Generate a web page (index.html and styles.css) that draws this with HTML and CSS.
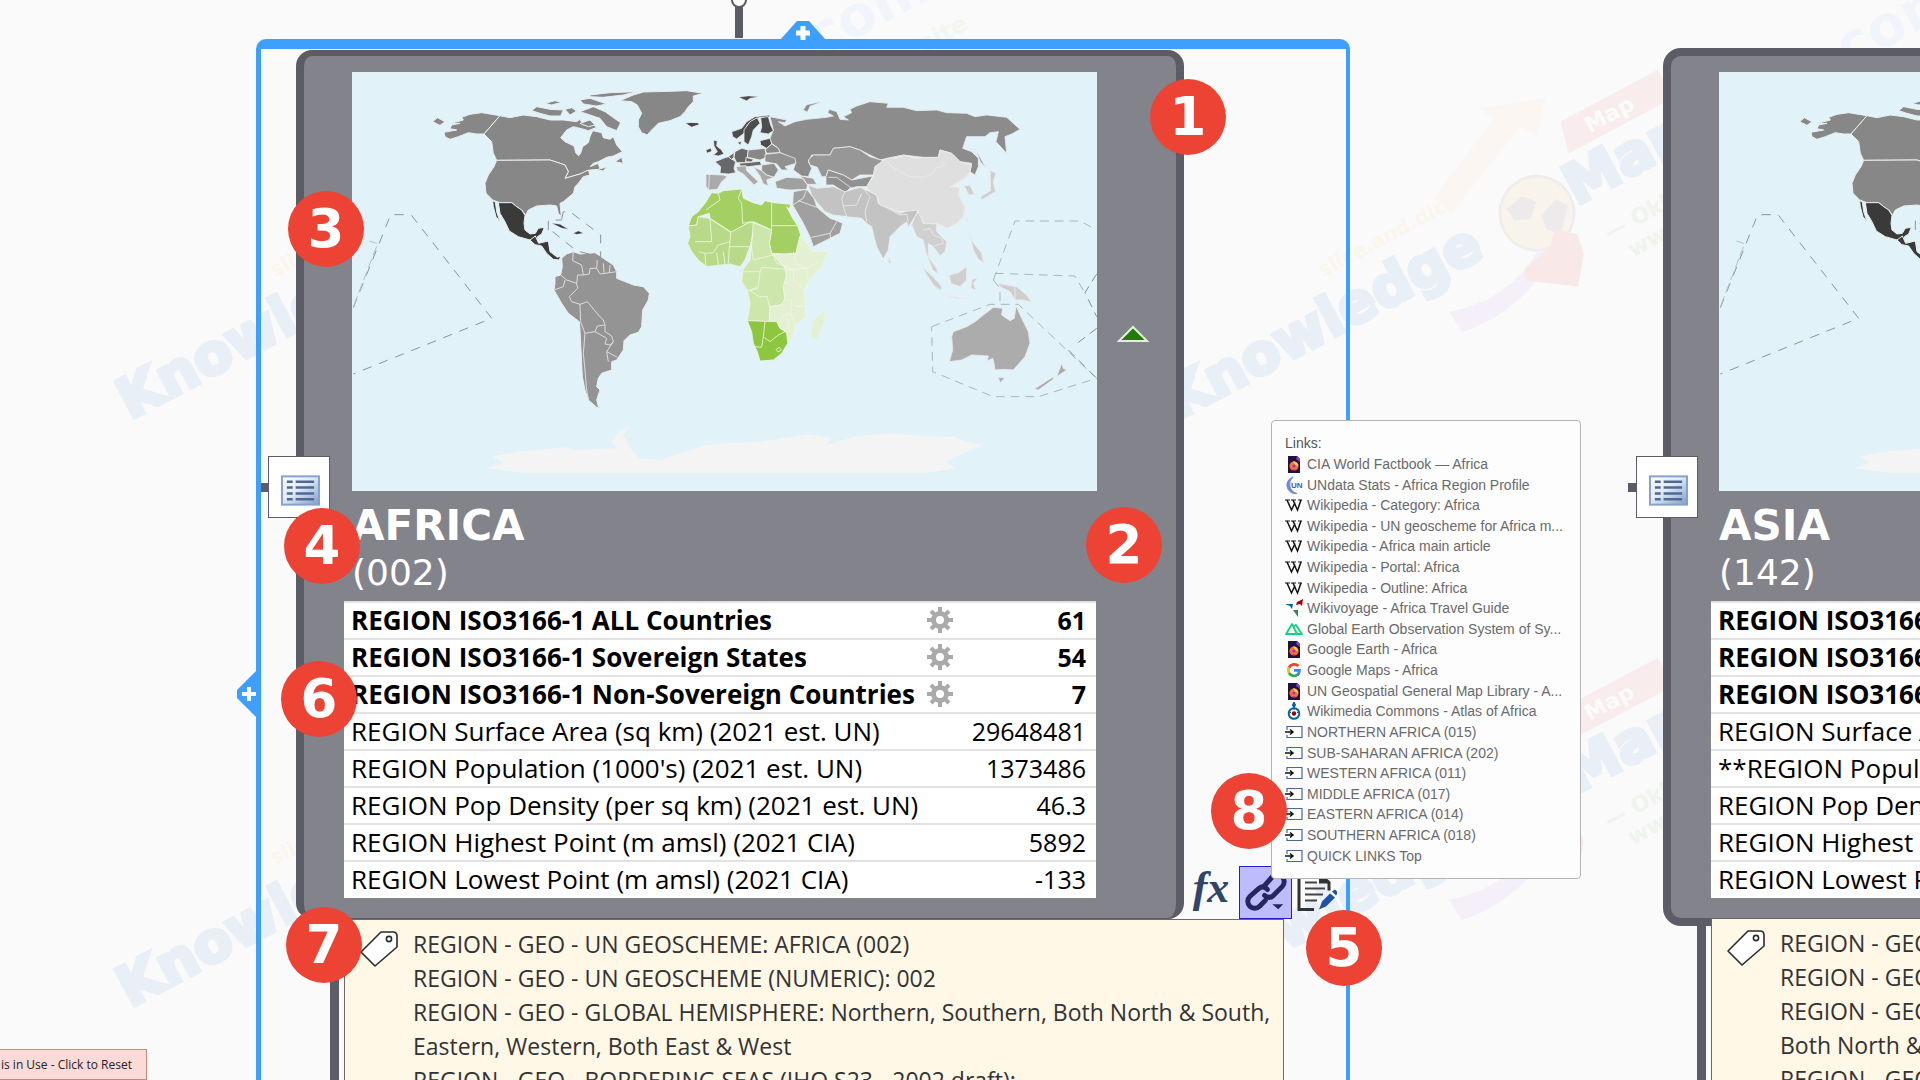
FILE: index.html
```html
<!DOCTYPE html>
<html lang="en">
<head>
<meta charset="utf-8">
<title>Regions of the world</title>
<link rel="stylesheet" href="styles.css">
</head>
<body>
<svg class="defs" aria-hidden="true">
  <symbol id="world" viewBox="0 0 745 419">
    <rect width="745" height="419" fill="#e1f2f9"/>
    <g transform="translate(-112 -72) scale(.33333)" fill="#f4f4f4">
      <path d="M740,1405 L790,1388 758,1370 830,1355 980,1342 1000,1350 1130,1345 1115,1325 1130,1300 1170,1275 1150,1305 1175,1350 1200,1375 1260,1380 1320,1360 1400,1335 1458,1330 1560,1325 1707,1303 1773,1315 1760,1335 1850,1308 1953,1300 2050,1308 2145,1310 2170,1322 2229,1335 2170,1360 2118,1385 2145,1405 2064,1418 850,1418Z"/>
    </g>
    <g transform="translate(-2 -2) scale(.33333)" stroke="#e9eef0" stroke-width="3" stroke-linejoin="round">
      <g fill="#878787">
        <path d="M282,187 L320,180 300,176 305,165 330,160 302,160 340,150 335,142 360,133 395,128 450,137 402,192 380,192 355,188 325,200 300,208 285,200Z"/>
        <path d="M248,155 L262,143 285,155 270,166Z"/>
        <path d="M450,137 L480,143 520,135 560,140 600,150 640,150 680,155 690,148 700,165 725,160 740,172 715,182 690,175 670,170 650,180 632,203 645,215 672,228 678,250 686,257 692,250 698,230 715,218 720,200 728,182 755,188 760,203 780,208 790,200 800,225 817,245 790,258 770,262 745,275 730,280 720,290 745,280 750,298 720,300 690,312 645,325 655,305 645,285 600,270 440,271 430,250 425,215 402,192Z"/>
        <path d="M440,271 L600,270 645,285 655,305 645,325 690,312 715,300 720,315 700,320 685,340 675,350 670,370 640,395 630,400 634,440 625,430 620,408 600,405 560,408 535,420 527,436 515,420 500,410 485,398 450,398 428,390 408,370 405,340 415,315 432,290Z"/>
        <path d="M545,122 L560,110 600,118 640,120 632,138 600,138 570,130Z M690,125 L730,110 765,125 800,150 812,158 800,182 770,170 750,145 720,135Z M720,75 L780,68 860,65 820,75 760,82 720,80Z M645,118 L665,113 680,123 660,135Z M690,90 L720,85 750,95 770,102 740,108 700,102Z M585,100 L615,92 635,97 605,105Z M690,160 L720,150 735,165 715,170Z M795,275 L815,262 820,280Z M740,300 L770,290 760,303Z"/>
        <path d="M810,92 L850,75 880,66 960,64 1010,62 1060,70 1030,78 1030,95 1015,110 1005,125 990,140 960,152 925,160 900,185 892,195 875,188 865,170 865,150 875,130 862,105 845,95Z"/>
      </g>
      <path d="M155,253 L185,248 M215,243 L300,215" fill="none"/>
      <path fill="#484848" d="M1005,160 L1020,157 1045,158 1048,164 1025,172Z"/>
      <g fill="#3a3a3a">
        <path d="M445,398 L485,398 500,410 515,420 525,436 522,460 525,480 540,492 556,490 565,475 583,472 575,492 562,500 560,518 540,510 505,500 478,483 465,455 450,430Z"/>
        <path d="M428,392 L436,396 440,425 450,455 438,440 430,410Z"/>
        <path d="M540,510 L556,498 566,520 595,513 600,545 622,562 632,558 628,570 610,568 590,550 575,528 555,524Z"/>
        <path stroke-width="1" d="M605,460 L630,463 655,478 635,474Z M670,490 L685,483 700,490 680,493Z"/>
      </g>
      <path fill="#949494" d="M650,552 L670,545 690,552 735,548 760,565 790,585 800,605 800,625 850,645 880,650 898,670 895,690 878,720 875,770 865,787 840,795 822,812 820,840 800,870 785,875 785,900 755,910 745,925 740,950 750,960 740,990 745,1010 760,1018 740,1012 715,990 705,960 697,920 690,780 688,755 655,730 635,700 612,660 615,640 615,620 632,615 637,590 635,565Z"/>
      <path fill="none" stroke="#dcdcdc" d="M670,545 L668,572 695,585 700,615 718,612 720,595 740,595 750,612 800,605 M740,595 L742,570 M760,580 L762,608 M780,585 L778,608 M632,615 L650,630 680,640 683,655 658,680 665,695 690,703 712,695 745,735 760,750 765,765 742,768 735,785 705,790 692,755 690,703 M612,660 L640,650 645,630 M680,640 L683,615 700,615 M735,785 L770,805 765,822 780,825 790,815 785,798 765,785 765,765 M790,815 L770,845 802,862 M770,845 L775,875 M705,790 L700,850 705,900 710,960 716,990"/>
      <g fill="none" stroke="#8f9496" stroke-dasharray="28 24">
        <path d="M10,713 L122,434 183,434 425,745 10,912"/>
        <path d="M595,480 V450 H635 M635,448 L640,425 660,425 752,495 752,560 680,543 608,485"/>
      </g>
      <path fill="none" stroke="#b9c0c3" stroke-dasharray="28 12" d="M12,705 L83,521 58,513"/>
    </g>
    <g transform="translate(318 -2) scale(.33333)" stroke="#ececec" stroke-width="2.5" stroke-linejoin="round">
      <path fill="#8c8c8c" d="M300,140 L350,150 345,158 325,155 345,168 375,155 410,148 470,142 490,138 473,128 478,118 500,125 510,148 535,150 520,140 545,128 540,118 560,108 600,95 655,100 650,112 700,112 740,122 800,120 830,128 890,130 915,140 950,135 1010,142 1050,178 1025,192 1005,200 1010,250 978,215 985,185 960,188 945,200 890,200 878,235 905,245 925,265 925,290 915,315 900,305 905,280 870,275 845,250 810,240 805,262 760,262 700,255 665,262 630,270 600,255 570,240 540,230 490,235 480,255 425,255 415,275 425,295 415,320 395,318 370,300 378,275 355,260 330,248 325,235 305,220 300,205 310,180Z"/>
      <path fill="#8c8c8c" stroke-width="1" d="M400,120 L410,105 455,95 420,108 412,125Z M547,73 L610,88 M547,76 L580,82 M770,102 L800,100 M920,245 L945,290 932,275Z"/>
      <path fill="#4c4c4c" stroke-width="1" d="M207,82 L235,78 265,80 240,85 230,92Z"/>
      <g fill="#4d4d4d">
        <path d="M130,210 L142,213 140,228 155,240 162,252 145,258 130,255 142,245 132,228Z M108,240 L122,234 126,244 110,250Z"/>
        <path d="M185,185 L215,175 230,155 255,140 300,135 298,142 270,142 250,150 232,165 222,190 200,207 188,200Z"/>
        <path d="M222,180 L240,155 262,143 270,160 250,180 245,200 235,225 222,215Z"/>
        <path d="M272,143 L295,140 302,165 310,182 295,192 270,188 275,172Z"/>
        <path d="M202,218 L214,213 212,226Z M270,212 L300,205 305,222 290,235 272,225Z"/>
      </g>
      <g fill="#686868">
        <path d="M135,275 L160,265 175,260 197,275 192,295 197,308 175,312 150,310 152,290Z"/>
        <path d="M195,245 L215,235 235,240 232,262 225,278 200,278 192,262Z M175,260 L192,248 192,262 185,268Z"/>
        <path d="M228,262 L250,268 246,276 228,275Z M208,280 L270,274 275,285 235,290 210,288Z"/>
      </g>
      <path fill="#888" d="M235,240 L285,235 290,262 270,270 232,262Z M285,240 L305,222 325,235 330,248 290,250Z"/>
      <path fill="#919191" d="M285,253 L330,248 375,265 378,280 345,290 355,300 335,300 320,282 285,275Z M275,285 L312,280 325,300 312,322 290,315 275,302Z"/>
      <path fill="#aaa" d="M108,313 L160,315 172,320 155,335 142,358 118,360 108,350Z M118,315 L116,358 M198,290 L228,287 230,302 265,335 252,345 220,312 202,302Z M250,290 L275,302 290,315 312,322 290,330 295,348 280,342 270,318Z M207,318 L212,340"/>
      <path fill="#979797" d="M415,270 L430,255 480,255 490,235 540,230 570,240 600,260 640,272 615,290 610,315 570,315 545,330 520,315 475,300 468,320 455,320 442,292 420,285Z"/>
      <path fill="#919191" d="M468,320 L475,300 520,315 545,330 608,318 590,350 560,350 540,355 525,368 490,345 468,345Z M475,322 L500,322 545,355"/>
      <path fill="#a0a0a0" d="M315,335 L350,322 400,325 412,345 410,358 360,360 320,355Z M390,318 L430,325 440,343 412,343Z"/>
      <path fill="#a0a0a0" d="M370,365 L410,358 432,385 440,410 450,420 480,445 495,450 518,460 510,490 480,505 430,530 420,500 400,460 368,405Z"/>
      <path fill="none" d="M368,405 L400,385 410,358 M385,392 L440,412 M425,502 L480,490 482,505 M480,490 L500,455"/>
      <path fill="#c3c3c3" d="M415,345 L440,355 490,350 525,365 570,352 600,365 620,375 625,400 690,430 720,420 745,420 735,440 715,470 710,455 690,470 660,500 655,540 640,567 620,530 605,470 590,460 575,445 530,440 490,435 465,425 440,395 425,375Z"/>
      <path fill="none" d="M525,365 L515,385 520,410 530,440 M520,408 L560,405 575,370 M580,355 L600,380 585,425 590,455 M625,400 L690,435 710,432 715,455"/>
      <path fill="#dfdfdf" d="M590,350 L610,320 615,290 650,265 690,262 700,255 735,265 805,262 810,240 845,250 870,275 905,285 900,305 885,325 850,345 840,350 870,352 865,375 885,410 880,440 860,460 830,475 800,460 770,465 750,445 745,420 690,425 630,405 620,375 600,365Z"/>
      <path fill="none" d="M650,275 L680,300 720,320 760,322 790,310 795,295 825,285 810,275"/>
      <path fill="#d0d0d0" d="M735,440 L745,425 760,460 800,462 800,485 830,515 825,545 810,557 790,530 775,520 775,560 800,595 803,612 788,600 768,548 760,510 740,500 725,465Z"/>
      <path fill="none" d="M760,480 L780,475 790,495 815,505 820,520 792,528"/>
      <path fill="#cfcfcf" d="M755,590 L790,620 815,650 812,662 790,645Z M820,675 L900,688 860,685Z M838,615 L865,608 890,590 890,630 870,650 842,640Z M905,630 L925,622 910,640 918,660 903,655Z M900,495 L908,515 935,550 941,578 925,568 910,540Z M985,640 L1010,645 1040,650 1070,675 1085,697 1060,690 1035,690 1020,665 990,650Z M1035,650 V690 M960,300 L978,310 970,335 976,365 935,390 932,380 962,362Z M882,348 L900,345 912,372 898,376Z M655,560 L664,578 656,580Z M888,448 L893,445 892,463Z"/>
      <g fill="#acacac">
        <path d="M845,800 L850,785 890,770 915,755 940,735 960,720 970,712 998,715 995,735 1020,752 1033,745 1038,707 1055,745 1075,785 1080,820 1065,860 1030,900 1000,898 975,900 972,880 968,865 952,873 955,858 905,855 875,870 838,875 848,840Z"/>
        <path d="M985,922 L1005,924 990,938Z M1175,880 L1180,895 1190,900 1160,920Z M1150,920 L1150,928 1105,960 1093,957Z"/>
      </g>
      <g stroke="#eef6e2">
        <path fill="#a4cf62" d="M55,468 L65,440 85,425 105,400 125,368 145,370 160,362 215,357 220,385 250,398 275,405 285,392 310,398 362,403 358,418 350,410 368,445 383,467 392,495 385,520 378,550 345,552 305,550 298,520 305,480 250,455 235,458 185,487 120,445 118,430 85,440 80,465Z"/>
        <path fill="#b8da88" d="M55,468 L80,465 85,440 118,445 182,487 235,458 250,458 250,490 240,530 225,570 210,590 180,582 110,590 85,570 65,545 53,520 60,500Z"/>
        <path fill="#cde6ac" d="M250,458 L305,480 298,520 305,550 345,595 350,615 340,650 345,690 330,705 300,710 298,755 232,752 240,700 232,660 215,635 218,600 240,570 245,520Z"/>
        <path fill="#e3f0d2" d="M310,555 L345,552 378,550 390,498 410,520 430,545 475,543 455,590 415,635 402,660 408,740 375,765 370,800 350,810 348,785 325,770 298,752 300,710 330,705 345,690 340,650 350,615 345,590Z"/>
        <path fill="#8dc63f" d="M232,752 L320,755 330,775 350,788 353,820 335,850 310,870 270,873 262,845 250,820 245,785Z"/>
        <path fill="#e3f0d2" stroke-width="1" d="M465,715 L460,760 440,808 422,800 430,750 450,735Z"/>
        <path fill="none" d="M145,370 L150,390 108,420 M215,357 L205,385 215,400 218,460 245,455 M305,400 V480 M305,467 H383 M120,445 L125,515 75,515 M182,487 L180,515 145,525 130,548 105,550 M180,515 L178,530 240,530 M178,530 L175,580 M85,545 L105,550 108,588 M140,548 L145,585 M160,545 L165,582 M250,490 L243,520 250,570 310,555 M218,605 L270,605 275,592 345,598 M270,605 L265,650 235,662 M265,655 L240,662 268,680 292,680 298,710 M345,598 L372,600 370,630 402,660 M310,555 L320,580 372,598 410,595 415,635 M370,545 L378,580 410,595 445,575 M390,520 L430,545 M345,640 L360,635 M340,690 L365,690 362,730 335,740 325,770 M375,710 L405,708 M362,730 L375,765 M348,740 L360,760 348,785 M285,755 L280,800 275,832 255,830 M280,800 L300,815 325,795 345,785 M318,838 L328,832 334,840 324,846Z"/>
      </g>
      <g fill="none" stroke="#aeb4b7" stroke-width="3" stroke-dasharray="26 18">
        <path d="M970,630 L1035,453 H1230 L1280,480 M975,610 L1215,618 1245,670 M970,630 L990,655 V700 M785,770 L960,703 1045,703 1280,925 1105,980 970,980 788,905Z"/>
        <path stroke="#8a8f91" d="M1280,612 L1245,668 1280,740 M1280,775 L1215,825 M1195,840 L1280,925"/>
      </g>
    </g>
  </symbol>
  <linearGradient id="sheet" x1="0" y1="0" x2="1" y2="1"><stop offset="0" stop-color="#fff"/><stop offset=".45" stop-color="#dfeafa"/><stop offset="1" stop-color="#7f9dcc"/></linearGradient>
  <symbol id="list" viewBox="0 0 40 31">
    <rect x="1" y="1" width="38" height="29" fill="url(#sheet)" stroke="#86a0cf" stroke-width="2"/>
    <path d="M6 6.500h6M15 6.500h19M6 12.500h6M15 12.500h19M6 18.500h6M15 18.500h19M6 24.500h6M15 24.500h19" stroke="#53688f" stroke-width="2.500"/>
  </symbol>
  <symbol id="tag" viewBox="0 0 40 38">
    <path d="M22 2h12q4 0 4 4v11L16 36 2 22Z" fill="#fff" stroke="#2b2b2b" stroke-width="1.600" stroke-linejoin="round"/>
    <circle cx="30" cy="9" r="2.600" fill="#fff" stroke="#2b2b2b" stroke-width="1.600"/>
  </symbol>
  <symbol id="gear" viewBox="0 0 26 26">
    <path d="M13 0v26M0 13h26M4 4l18 18M22 4L4 22" stroke="#aaa" stroke-width="4"/>
    <circle cx="13" cy="13" r="6.500" fill="#fff" stroke="#aaa" stroke-width="5"/>
  </symbol>
  <symbol id="fox" viewBox="0 0 18 18">
    <path d="M3 1h9l3 3v14H3Z" fill="#20123a"/><path d="M12 1l3 3v3l-4-3Z" fill="#7542e5"/>
    <circle cx="9" cy="11" r="4.600" fill="#ff7139"/><path d="M5 10a4.500 4.500 0 0 0 8.500 2Q11 16 8 15 5 13 5 10Z" fill="#e3264f"/><path d="M8 6q5 1 5 5l-3-1Z" fill="#ffd43a"/><circle cx="9" cy="11" r="1.600" fill="#8a3bc9"/>
  </symbol>
  <symbol id="un" viewBox="0 0 18 18">
    <path d="M8 1A8.500 8.500 0 0 0 12 17.500 9.500 9.500 0 0 1 8 1Z" fill="#6f8bd0" stroke="#6f8bd0" stroke-width="1"/>
    <text x="6" y="12" font-family="Liberation Sans, sans-serif" font-weight="700" font-size="8" fill="#3f5db3">UN</text>
  </symbol>
  <symbol id="wiki" viewBox="0 0 18 18">
    <path d="M0 4h5M6 4h5M13 4h4" stroke="#111" stroke-width="1"/><path d="M2 4l4.500 10L10 6.500M8 4l4.500 10L16 4" fill="none" stroke="#111" stroke-width="1.500"/>
  </symbol>
  <symbol id="voyage" viewBox="0 0 18 18">
    <path d="M0 5h8l-1 5-2-3Z" fill="#0063a0"/><path d="M18 0l-1 7-2-2-4 1 1-3Z" fill="#a00"/><path d="M8 11l5 0 0 7Z" fill="#2a8c50"/>
  </symbol>
  <symbol id="geo" viewBox="0 0 18 18"><path d="M1 14L7 4l5 10ZM9 6l2-1 6 9h-5" fill="none" stroke="#0fd67a" stroke-width="1.800" stroke-linejoin="round"/></symbol>
  <symbol id="goog" viewBox="0 0 18 18" >
    <g fill="none" stroke-width="2.800"><path d="M13.500 5A6 6 0 0 0 4 6.500" stroke="#ea4335"/><path d="M4 6.500a6 6 0 0 0 0 5.500" stroke="#fbbc05"/><path d="M4 12a6 6 0 0 0 9 1.500" stroke="#34a853"/><path d="M9 9.300h5.500q0 3-2 4.500" stroke="#4285f4"/></g>
  </symbol>
  <symbol id="commons" viewBox="0 0 18 18">
    <circle cx="9" cy="11.500" r="5.300" fill="none" stroke="#069" stroke-width="2"/><circle cx="9" cy="11.500" r="2.200" fill="#900"/><path d="M9 0q-3 3 0 6 3-3 0-6M9 4v4M4 9l2 2M14 9l-2 2" fill="#069" stroke="#069"/>
  </symbol>
  <symbol id="jump" viewBox="0 0 18 18">
    <path d="M2 7V3.500h15v11H2V12" fill="none" stroke="#44689f" stroke-width="1.200"/><path d="M0 9h7M5 6.500L8 9 5 11.500" fill="none" stroke="#111" stroke-width="1.500"/>
  </symbol>
  <g id="mark" font-family="DejaVu Sans, sans-serif" font-weight="700">
    <g transform="rotate(-28)">
      <text x="0" y="0" font-size="56" fill="#e9eff7" stroke="#e9eff7" stroke-width="4">Knowledge</text>
      <text x="452" y="-2" font-size="56" fill="#e9eff7" stroke="#e9eff7" stroke-width="4">Maps</text>
      <text x="195" y="-58" font-size="20" fill="#fbf6ec">slice.and.dice</text>
      <path d="M330 -76L420 -118 412 -134 476 -112 450 -82 440 -98 338 -54Z" fill="#fcf6f2"/>
      <path d="M478 -84h110v32H470Z" fill="#f9ecec"/>
      <text x="498" y="-60" font-size="22" fill="#fbfbfb">Map</text>
      <text x="465" y="44" font-size="22" fill="#eff4ec">&#8212; Oklahoma</text>
      <text x="478" y="70" font-size="22" fill="#eff4ec">www.site</text>
      <circle cx="414" cy="-14" r="37" fill="#f8f4ec" stroke="#efeeec" stroke-width="3"/>
      <path d="M389 -32l20-4 10 12-14 12-14-6ZM417 -10l20-8 8 12-20 22-10-12Z" fill="#edeaec"/>
      <path d="M290 32Q350 50 400 18L408 32Q352 66 292 56Z" fill="#f4eff9"/>
      <path d="M376 30L410 22 422 8 440 24 436 44 416 70 372 40Z" fill="#f9e8e8"/>
    </g>
  </g>
</svg>

<main class="canvas">
  <svg class="watermarks" aria-hidden="true">
    <use href="#mark" x="130" y="420"/><use href="#mark" x="1178" y="420"/>
    <use href="#mark" x="130" y="1008"/><use href="#mark" x="1178" y="1008"/>
    <g font-family="DejaVu Sans, sans-serif" font-weight="700" font-size="56" fill="#f2f4fb">
      <text transform="translate(800 68) rotate(-28)">.com</text><text transform="translate(1848 68) rotate(-28)">com</text>
      <text transform="translate(925 52) rotate(-28)" font-size="24" fill="#f2f6ee">site</text>
    </g>
  </svg>

  <svg class="trunk" viewBox="0 0 16 38" aria-hidden="true"><path d="M8 0v38" stroke="#5c5c66" stroke-width="8"/><circle cx="8" cy="0" r="7" fill="#fff" stroke="#5c5c66" stroke-width="2"/></svg>
  <div class="selection"></div>
  <button class="add add-top" aria-label="Add topic above"><svg viewBox="0 0 46 20"><path d="M0 20L17 1h12L46 20Z" fill="#3f9fff"/><path d="M23 6v14M16 13h14" stroke="#fff" stroke-width="5"/></svg></button>
  <button class="add add-left" aria-label="Add topic before"><svg viewBox="0 0 20 48"><path d="M20 0L0 20v8L20 48Z" fill="#3f9fff"/><path d="M12 17v14M5 24h14" stroke="#fff" stroke-width="4"/></svg></button>

  <section class="topic topic-africa">
    <article class="card">
      <svg class="map" viewBox="0 0 745 419" role="img" aria-label="World map, Africa highlighted"><use href="#world"/></svg>
      <h2>AFRICA</h2>
      <p class="code">(002)</p>
      <table>
        <tr class="key"><td>REGION ISO3166-1 ALL Countries</td><td class="calc"><svg><use href="#gear"/></svg></td><td class="num">61</td></tr>
        <tr class="key"><td>REGION ISO3166-1 Sovereign States</td><td class="calc"><svg><use href="#gear"/></svg></td><td class="num">54</td></tr>
        <tr class="key"><td>REGION ISO3166-1 Non-Sovereign Countries</td><td class="calc"><svg><use href="#gear"/></svg></td><td class="num">7</td></tr>
        <tr><td colspan="2">REGION Surface Area (sq km) (2021 est. UN)</td><td class="num">29648481</td></tr>
        <tr><td colspan="2">REGION Population (1000's) (2021 est. UN)</td><td class="num">1373486</td></tr>
        <tr><td colspan="2">REGION Pop Density (per sq km) (2021 est. UN)</td><td class="num">46.3</td></tr>
        <tr><td colspan="2">REGION Highest Point (m amsl) (2021 CIA)</td><td class="num">5892</td></tr>
        <tr><td colspan="2">REGION Lowest Point (m amsl) (2021 CIA)</td><td class="num">-133</td></tr>
      </table>
    </article>
    <div class="branch">
      <div class="tags">
        <svg class="tag"><use href="#tag"/></svg>
        <div>
          <p>REGION - GEO - UN GEOSCHEME: AFRICA (002)</p>
          <p>REGION - GEO - UN GEOSCHEME (NUMERIC): 002</p>
          <p>REGION - GEO - GLOBAL HEMISPHERE: Northern, Southern, Both North &amp; South,<br>Eastern, Western, Both East &amp; West</p>
          <p>REGION - GEO - BORDERING SEAS (IHO S23 - 2002 draft):</p>
        </div>
      </div>
    </div>
    <span class="nub"></span>
    <button class="notes" aria-label="Show properties"><svg><use href="#list"/></svg></button>
    <svg class="collapse" viewBox="0 0 32 18" aria-hidden="true"><path d="M16 2L30 16H2Z" fill="#237a06" stroke="#dff0df" stroke-width="2"/></svg>
    <div class="tools">
      <button class="fx" aria-label="Formula">fx</button>
      <button class="link" aria-label="Links"><svg viewBox="0 0 52 52"><g fill="none" stroke="#252560" stroke-width="5" stroke-linecap="round"><path d="M25 19L33 10a7 7 0 0 1 10 10L34 29q-4 4-9 0"/><path d="M26 34L20 40a7 7 0 0 1-10-10L19 22q5-4 9 1"/></g><path d="M33 38h11l-5 5Z" fill="#252560"/></svg></button>
      <button aria-label="Notes"><svg viewBox="0 0 40 52"><path d="M2 4V43h15M2 9h22l8 7v8" fill="none" stroke="#333" stroke-width="3"/><path d="M22 9v8h10Z" fill="#333"/><path d="M8 16h12M8 22h20M8 28h18M8 34h12" stroke="#444" stroke-width="2"/><path d="M22 43l3-8 8-8 5 4-9 9ZM35 25l3-2 3 3-2 3Z" fill="#1f53a8"/></svg></button>
    </div>
  </section>

  <section class="topic topic-asia">
    <article class="card">
      <svg class="map" viewBox="0 0 745 419" role="img" aria-label="World map"><use href="#world"/></svg>
      <h2>ASIA</h2>
      <p class="code">(142)</p>
      <table>
        <tr class="key"><td>REGION ISO3166-1 ALL Countries</td></tr>
        <tr class="key"><td>REGION ISO3166-1 Sovereign States</td></tr>
        <tr class="key"><td>REGION ISO3166-1 Non-Sovereign Countries</td></tr>
        <tr><td>REGION Surface Area (sq km) (2021 est. UN)</td></tr>
        <tr><td>**REGION Population (1000's) (2021 est. UN)</td></tr>
        <tr><td>REGION Pop Density (per sq km) (2021 est. UN)</td></tr>
        <tr><td>REGION Highest Point (m amsl) (2021 CIA)</td></tr>
        <tr><td>REGION Lowest Point (m amsl) (2021 CIA)</td></tr>
      </table>
    </article>
    <div class="branch">
      <div class="tags">
        <svg class="tag"><use href="#tag"/></svg>
        <div>
          <p>REGION - GEO - UN GEOSCHEME: ASIA (142)</p>
          <p>REGION - GEO - UN GEOSCHEME (NUMERIC): 142</p>
          <p>REGION - GEO - GLOBAL HEMISPHERE: Northern, Southern,<br>Both North &amp; South, Eastern</p>
          <p>REGION - GEO - BORDERING SEAS (IHO S23 - 2002 draft):</p>
        </div>
      </div>
    </div>
    <span class="nub"></span>
    <button class="notes" aria-label="Show properties"><svg><use href="#list"/></svg></button>
  </section>

  <aside class="popup">
    <p>Links:</p>
    <a href="#"><svg><use href="#fox"/></svg>CIA World Factbook — Africa</a>
    <a href="#"><svg><use href="#un"/></svg>UNdata Stats - Africa Region Profile</a>
    <a href="#"><svg><use href="#wiki"/></svg>Wikipedia - Category: Africa</a>
    <a href="#"><svg><use href="#wiki"/></svg>Wikipedia - UN geoscheme for Africa m...</a>
    <a href="#"><svg><use href="#wiki"/></svg>Wikipedia - Africa main article</a>
    <a href="#"><svg><use href="#wiki"/></svg>Wikipedia - Portal: Africa</a>
    <a href="#"><svg><use href="#wiki"/></svg>Wikipedia - Outline: Africa</a>
    <a href="#"><svg><use href="#voyage"/></svg>Wikivoyage - Africa Travel Guide</a>
    <a href="#"><svg><use href="#geo"/></svg>Global Earth Observation System of Sy...</a>
    <a href="#"><svg><use href="#fox"/></svg>Google Earth - Africa</a>
    <a href="#"><svg><use href="#goog"/></svg>Google Maps - Africa</a>
    <a href="#"><svg><use href="#fox"/></svg>UN Geospatial General Map Library - A...</a>
    <a href="#"><svg><use href="#commons"/></svg>Wikimedia Commons - Atlas of Africa</a>
    <a href="#"><svg><use href="#jump"/></svg>NORTHERN AFRICA (015)</a>
    <a href="#"><svg><use href="#jump"/></svg>SUB-SAHARAN AFRICA (202)</a>
    <a href="#"><svg><use href="#jump"/></svg>WESTERN AFRICA (011)</a>
    <a href="#"><svg><use href="#jump"/></svg>MIDDLE AFRICA (017)</a>
    <a href="#"><svg><use href="#jump"/></svg>EASTERN AFRICA (014)</a>
    <a href="#"><svg><use href="#jump"/></svg>SOUTHERN AFRICA (018)</a>
    <a href="#"><svg><use href="#jump"/></svg>QUICK LINKS Top</a>
  </aside>

  <span class="badge b1">1</span>
  <span class="badge b2">2</span>
  <span class="badge b3">3</span>
  <span class="badge b4">4</span>
  <span class="badge b5">5</span>
  <span class="badge b6">6</span>
  <span class="badge b7">7</span>
  <span class="badge b8">8</span>

  <button class="reset">is in Use - Click to Reset</button>
</main>
</body>
</html>
```
FILE: styles.css
```css
* { box-sizing: border-box; margin: 0; }
body { background: #fafafa; font-family: "Open Sans", "Noto Sans", sans-serif; overflow: hidden; }
button { padding: 0; border: 0; background: none; font: inherit; }
button svg { display: block; width: 100%; height: 100%; }
.defs { position: absolute; width: 0; height: 0; }

.canvas { position: relative; width: 100%; height: 100vh; overflow: hidden; }
.watermarks { position: absolute; width: 100%; height: 100%; }

.trunk { position: absolute; left: 731px; top: 0; width: 16px; height: 38px; }
.selection {
  position: absolute; left: 256px; top: 39px; width: 1094px; height: 1100px;
  border: solid #3f9fff; border-width: 10px 4px 0 5px; border-radius: 10px 10px 0 0;
}
.add { position: absolute; }
.add-top { left: 780px; top: 20px; width: 46px; height: 20px; }
.add-left { left: 237px; top: 670px; width: 20px; height: 48px; }

/* topics on the canvas */
.topic { position: absolute; width: 988px; }
.topic-africa { left: 296px; top: 50px; }
.topic-asia { left: 1663px; top: 48px; }
.card {
  width: 888px; padding: 16px 80px 20px 48px;
  background: #83838c; border: 8px solid #5c5c66; border-radius: 18px;
}
.topic-africa .card { border-width: 6px 8px 1px 8px; border-radius: 16px; }
.map { display: block; width: 745px; aspect-ratio: 745 / 419; }
.card h2, .code { color: #fff; font-family: "DejaVu Sans", sans-serif; }
.card h2 { padding-top: 10px; font-size: 42px; line-height: 50px; font-weight: 700; }
.code { font-size: 36px; line-height: 44px; margin-bottom: 6px; }

table { width: 752px; margin-left: -8px; border-collapse: collapse; background: #fff; color: #000; font-size: 26px; }
tr { height: 37px; }
td { height: 37px; padding: 0 0 2px 7px; line-height: 32px; border-top: 2px solid #e2e2e2; white-space: nowrap; }
.key { font-weight: 700; }
.num { padding: 0 10px 2px 0; text-align: right; font-size: 25px; }
.calc { width: 34px; padding: 0; }
.calc svg { display: block; width: 26px; height: 26px; margin: 0 0 2px auto; }
.key .num { width: 143px; }

.branch { position: relative; margin-left: 34px; padding-left: 14px; border-left: 9px solid #5c5c66; }
.topic-asia .branch { margin-top: -8px; }
.tags {
  display: flex; gap: 14px; width: 940px; height: 300px; margin-left: -9px; padding: 7px 0 0 14px;
  background: #fff8e6; border: 1px solid #6a6a6a; color: #333; font-size: 23px; line-height: 34px; white-space: nowrap;
}
.tag { width: 40px; height: 38px; margin-top: 3px; flex: none; }

.nub { position: absolute; left: -35px; top: 433px; width: 8px; height: 9px; background: #5c5c66; }
.notes {
  position: absolute; left: -28px; top: 406px; width: 62px; height: 62px; padding: 18px 9px 11px 12px;
  background: #fff; border: 1px solid #5c5c66;
}
.topic-asia .nub { top: 435px; }
.topic-asia .notes { left: -27px; top: 408px; }
.collapse { position: absolute; left: 821px; top: 275px; width: 32px; height: 18px; }

.tools { position: absolute; left: 892px; top: 816px; display: flex; gap: 5px; align-items: stretch; height: 53px; }
.fx { width: 46px; padding-bottom: 10px; font: italic 700 44px/36px "Liberation Serif", serif; color: #2f4668; }
.link { width: 53px; background: #bcbcff; border: 1px solid #2020d0; }
.tools button:last-child { width: 40px; }

/* link list */
.popup {
  position: absolute; left: 1271px; top: 420px; width: 310px; height: 459px; padding: 12px 14px 12px 13px;
  display: grid; grid-auto-rows: 1fr; align-items: center;
  background: #fdfdfd; border: 1px solid #b4b4b4; border-radius: 4px;
  font: 14px/20px "Liberation Sans", sans-serif; color: #555; white-space: nowrap;
}
.popup a { display: flex; align-items: center; gap: 4px; color: #6a6a6a; text-decoration: none; }
.popup svg { width: 18px; height: 18px; flex: none; }

/* numbered callouts */
.badge {
  position: absolute; width: 76px; height: 76px; border-radius: 50%;
  background: #ec4335; color: #fff; text-align: center; font: 700 53px/76px "DejaVu Sans", sans-serif;
}
.b1 { left: 1150px; top: 79px; }
.b2 { left: 1086px; top: 507px; }
.b3 { left: 288px; top: 191px; }
.b4 { left: 284px; top: 508px; }
.b5 { left: 1306px; top: 910px; }
.b6 { left: 281px; top: 661px; }
.b7 { left: 286px; top: 907px; }
.b8 { left: 1211px; top: 773px; }

.reset {
  position: absolute; left: 0; bottom: 0; width: 147px; height: 31px; padding-left: 1px; text-align: left;
  background: #fadbd8; border: solid #c98a86; border-width: 1px 1px 1px 0; font-size: 12px; color: #222;
}
```
